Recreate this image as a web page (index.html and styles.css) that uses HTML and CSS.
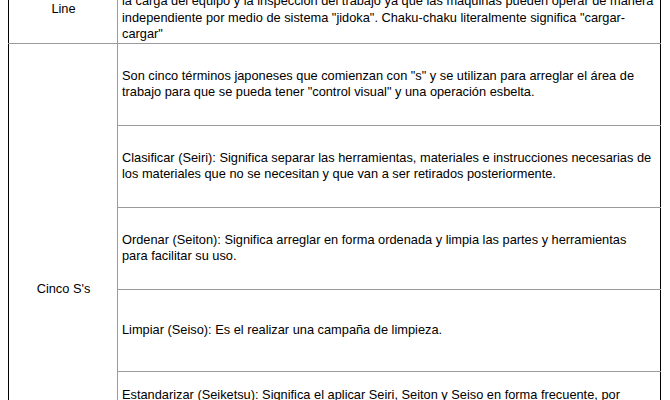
FILE: index.html
```html
<!DOCTYPE html>
<html lang="es">
<head>
  <meta charset="UTF-8" />
  <title>Cinco S's</title>
  <link rel="stylesheet" href="styles.css">
</head>
<body>
  <div class="sheet">
    <table class="grid">
      <colgroup>
        <col class="col-term">
        <col class="col-desc">
      </colgroup>
      <tr>
        <td class="term term-first">Chaku-chaku<br>Line</td>
        <td class="desc">Es una línea de producción donde el operador se mueve de una máquina a otra realizando<br>
          solamente la carga, mientras el proceso se realiza de forma automática. Esto libera al operador de<br>
          la carga del equipo y la inspección del trabajo ya que las máquinas pueden operar de manera<br>
          independiente por medio de sistema "jidoka". Chaku-chaku literalmente significa "cargar-<br>
          cargar"</td>
      </tr>
      <tr>
        <td class="term" rowspan="6">Cinco S's</td>
        <td class="desc">Son cinco términos japoneses que comienzan con "s" y se utilizan para arreglar el área de<br>
          trabajo para que se pueda tener "control visual" y una operación esbelta.</td>
      </tr>
      <tr>
        <td class="desc">Clasificar (Seiri): Significa separar las herramientas, materiales e instrucciones necesarias de<br>
          los materiales que no se necesitan y que van a ser retirados posteriormente.</td>
      </tr>
      <tr>
        <td class="desc">Ordenar (Seiton): Significa arreglar en forma ordenada y limpia las partes y herramientas<br>
          para facilitar su uso.</td>
      </tr>
      <tr class="dark-top">
        <td class="desc">Limpiar (Seiso): Es el realizar una campaña de limpieza.</td>
      </tr>
      <tr>
        <td class="desc">Estandarizar (Seiketsu): Significa el aplicar Seiri, Seiton y Seiso en forma frecuente, por<br>
          medio de procedimientos estándar, para mantener el área de trabajo en condiciones<br>
          óptimas.</td>
      </tr>
      <tr>
        <td class="desc">Disciplina (Shitsuke): Significa crear el hábito de mantener los procedimientos establecidos.</td>
      </tr>
    </table>
  </div>
</body>
</html>
```

FILE: styles.css
```css
* {
  box-sizing: border-box;
}

body {
  margin: 0;
  background: #fff;
  overflow: hidden;
  font-family: 'Liberation Sans', Arial, sans-serif;
  font-size: 12.8px;
  color: #000;
}

.sheet {
  margin: -41px 0 0 8px;
}

.grid {
  border-collapse: collapse;
  table-layout: fixed;
  width: 653px;
  border-left: 1px solid #000;
  border-right: 1px solid #000;
}

.col-term {
  width: 109px;
}

.grid td {
  height: 82px;
  padding: 0 3px 0 4px;
  line-height: 16.5px;
  border: 1px solid #9a9a9a;
  vertical-align: middle;
}

.grid td:first-child {
  border-left-color: #000;
}

.grid td:last-child {
  border-right-color: #000;
}

.desc {
  white-space: nowrap;
  overflow: hidden;
}

.term {
  text-align: center;
}

.term-first {
  padding-top: 2px;
}

.dark-top td {
  border-top-color: #000;
}
```
